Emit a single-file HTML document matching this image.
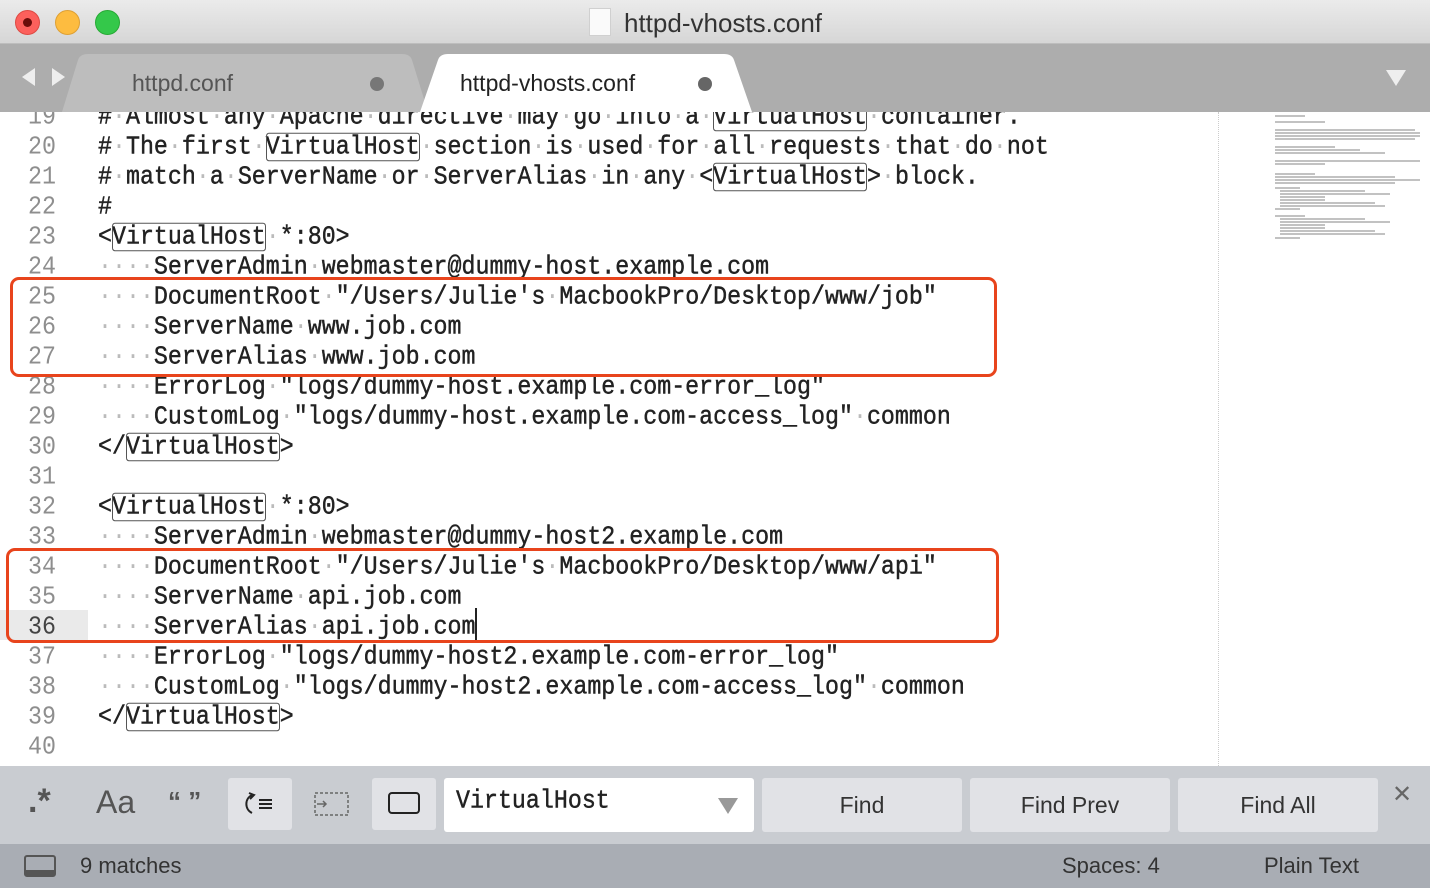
<!DOCTYPE html>
<html><head><meta charset="utf-8"><style>
*{margin:0;padding:0;box-sizing:border-box}
body{width:1430px;height:888px;overflow:hidden;background:#fff;font-family:"Liberation Sans",sans-serif;position:relative}
.title{position:absolute;left:0;top:0;width:1430px;height:44px;background:linear-gradient(#ebebeb,#d6d6d6);border-bottom:1px solid #bdbdbd}
.tl{position:absolute;top:10px;width:25px;height:25px;border-radius:50%}
.ttext{position:absolute;left:624px;top:8px;font-size:26px;color:#333}
.tabbar{position:absolute;left:0;top:44px;width:1430px;height:68px;background:#adadad}
.tab{position:absolute;top:10px;height:58px;font-size:23px;line-height:58px}
.code{position:absolute;left:0;top:112px;width:1430px;height:654px;overflow:hidden}
.ln{position:absolute;left:0;width:88px;padding-left:28px;font-family:"Liberation Mono",monospace;font-size:23.3px;color:#8e8e8e;height:30px;line-height:30px;transform:scaleY(1.1)}
.tx{position:absolute;left:98px;font-family:"Liberation Mono",monospace;font-size:23.3px;color:#222;white-space:pre;height:30px;line-height:30px;transform:scaleY(1.1);-webkit-text-stroke:0.4px #222}
.d{color:#bbb;-webkit-text-stroke:0}
.m{outline:1.5px solid #555;border-radius:3px;outline-offset:-1px}
.red{position:absolute;border:3.5px solid #e8441c;border-radius:9px}
.find{position:absolute;left:0;top:766px;width:1430px;height:78px;background:#c9ccd1}
.status{position:absolute;left:0;top:844px;width:1430px;height:44px;background:#a9adb4;font-size:22px;color:#333}
.btn{position:absolute;top:12px;height:54px;width:200px;background:#e1e2e6;border-radius:3px;font-size:23px;color:#333;text-align:center;line-height:54px}
.mm{position:absolute;height:1.5px;background:#9a9a9a;opacity:.6}
</style></head><body>
<div class="title">
<div class="tl" style="left:15px;background:#fc605c;border:1px solid #de4a43"><div style="width:9px;height:9px;border-radius:50%;background:#6b0d0a;margin:7px"></div></div>
<div class="tl" style="left:55px;background:#fdbc40;border:1px solid #dea034"></div>
<div class="tl" style="left:95px;background:#34c84a;border:1px solid #27aa35"></div>
<div style="position:absolute;left:589px;top:8px;width:22px;height:28px;background:#fafafa;border:1px solid #d0d0d0"></div>
<div class="ttext">httpd-vhosts.conf</div>
</div>
<div class="tabbar">
<div style="position:absolute;left:22px;top:24px;width:0;height:0;border-top:9px solid transparent;border-bottom:9px solid transparent;border-right:13px solid #eee"></div>
<div style="position:absolute;left:52px;top:24px;width:0;height:0;border-top:9px solid transparent;border-bottom:9px solid transparent;border-left:13px solid #eee"></div>
<svg style="position:absolute;left:0;top:0" width="1430" height="68">
<path d="M62 68 L78 16 Q80 10 88 10 L402 10 Q410 10 412 16 L428 68 Z" fill="#bdbdbd"/>
<path d="M420 68 L438 16 Q440 10 448 10 L724 10 Q732 10 734 16 L752 68 Z" fill="#fff"/>
<path d="M1386 26 L1406 26 L1396 42 Z" fill="#eee"/>
</svg>
<div class="tab" style="left:132px;color:#555">httpd.conf</div>
<div style="position:absolute;left:370px;top:33px;width:14px;height:14px;border-radius:50%;background:#777"></div>
<div class="tab" style="left:460px;color:#222">httpd-vhosts.conf</div>
<div style="position:absolute;left:698px;top:33px;width:14px;height:14px;border-radius:50%;background:#666"></div>
</div>
<div class="code">
<div style="position:absolute;left:0;top:498px;width:88px;height:30px;background:#eaeaea"></div>
<div style="position:absolute;left:1218px;top:0;width:0;height:654px;border-left:1px dotted #ccc"></div>
<div class="ln" style="top:-10px">19</div><div class="tx" style="top:-10px">#<span class="d">·</span>Almost<span class="d">·</span>any<span class="d">·</span>Apache<span class="d">·</span>directive<span class="d">·</span>may<span class="d">·</span>go<span class="d">·</span>into<span class="d">·</span>a<span class="d">·</span><span class="m">VirtualHost</span><span class="d">·</span>container.</div>
<div class="ln" style="top:20px">20</div><div class="tx" style="top:20px">#<span class="d">·</span>The<span class="d">·</span>first<span class="d">·</span><span class="m">VirtualHost</span><span class="d">·</span>section<span class="d">·</span>is<span class="d">·</span>used<span class="d">·</span>for<span class="d">·</span>all<span class="d">·</span>requests<span class="d">·</span>that<span class="d">·</span>do<span class="d">·</span>not</div>
<div class="ln" style="top:50px">21</div><div class="tx" style="top:50px">#<span class="d">·</span>match<span class="d">·</span>a<span class="d">·</span>ServerName<span class="d">·</span>or<span class="d">·</span>ServerAlias<span class="d">·</span>in<span class="d">·</span>any<span class="d">·</span>&lt;<span class="m">VirtualHost</span>&gt;<span class="d">·</span>block.</div>
<div class="ln" style="top:80px">22</div><div class="tx" style="top:80px">#</div>
<div class="ln" style="top:110px">23</div><div class="tx" style="top:110px">&lt;<span class="m">VirtualHost</span><span class="d">·</span>*:80&gt;</div>
<div class="ln" style="top:140px">24</div><div class="tx" style="top:140px"><span class="d">····</span>ServerAdmin<span class="d">·</span>webmaster@dummy-host.example.com</div>
<div class="ln" style="top:170px">25</div><div class="tx" style="top:170px"><span class="d">····</span>DocumentRoot<span class="d">·</span>"/Users/Julie's<span class="d">·</span>MacbookPro/Desktop/www/job"</div>
<div class="ln" style="top:200px">26</div><div class="tx" style="top:200px"><span class="d">····</span>ServerName<span class="d">·</span>www.job.com</div>
<div class="ln" style="top:230px">27</div><div class="tx" style="top:230px"><span class="d">····</span>ServerAlias<span class="d">·</span>www.job.com</div>
<div class="ln" style="top:260px">28</div><div class="tx" style="top:260px"><span class="d">····</span>ErrorLog<span class="d">·</span>"logs/dummy-host.example.com-error_log"</div>
<div class="ln" style="top:290px">29</div><div class="tx" style="top:290px"><span class="d">····</span>CustomLog<span class="d">·</span>"logs/dummy-host.example.com-access_log"<span class="d">·</span>common</div>
<div class="ln" style="top:320px">30</div><div class="tx" style="top:320px">&lt;/<span class="m">VirtualHost</span>&gt;</div>
<div class="ln" style="top:350px">31</div>
<div class="ln" style="top:380px">32</div><div class="tx" style="top:380px">&lt;<span class="m">VirtualHost</span><span class="d">·</span>*:80&gt;</div>
<div class="ln" style="top:410px">33</div><div class="tx" style="top:410px"><span class="d">····</span>ServerAdmin<span class="d">·</span>webmaster@dummy-host2.example.com</div>
<div class="ln" style="top:440px">34</div><div class="tx" style="top:440px"><span class="d">····</span>DocumentRoot<span class="d">·</span>"/Users/Julie's<span class="d">·</span>MacbookPro/Desktop/www/api"</div>
<div class="ln" style="top:470px">35</div><div class="tx" style="top:470px"><span class="d">····</span>ServerName<span class="d">·</span>api.job.com</div>
<div class="ln" style="top:500px;color:#444">36</div><div class="tx" style="top:500px"><span class="d">····</span>ServerAlias<span class="d">·</span>api.job.com</div>
<div style="position:absolute;left:475px;top:496px;width:2px;height:32px;background:#222"></div>
<div class="ln" style="top:530px">37</div><div class="tx" style="top:530px"><span class="d">····</span>ErrorLog<span class="d">·</span>"logs/dummy-host2.example.com-error_log"</div>
<div class="ln" style="top:560px">38</div><div class="tx" style="top:560px"><span class="d">····</span>CustomLog<span class="d">·</span>"logs/dummy-host2.example.com-access_log"<span class="d">·</span>common</div>
<div class="ln" style="top:590px">39</div><div class="tx" style="top:590px">&lt;/<span class="m">VirtualHost</span>&gt;</div>
<div class="ln" style="top:620px">40</div>
<div class="red" style="left:10px;top:165px;width:987px;height:100px"></div>
<div class="red" style="left:6px;top:436px;width:993px;height:95px"></div>
<div class="mm" style="left:1275px;top:3px;width:30px"></div>
<div class="mm" style="left:1275px;top:9px;width:50px"></div>
<div class="mm" style="left:1275px;top:17px;width:140px"></div>
<div class="mm" style="left:1275px;top:20px;width:145px"></div>
<div class="mm" style="left:1275px;top:23px;width:145px"></div>
<div class="mm" style="left:1275px;top:26px;width:140px"></div>
<div class="mm" style="left:1275px;top:34px;width:60px"></div>
<div class="mm" style="left:1275px;top:37px;width:85px"></div>
<div class="mm" style="left:1275px;top:40px;width:110px"></div>
<div class="mm" style="left:1275px;top:48px;width:145px"></div>
<div class="mm" style="left:1275px;top:51px;width:50px"></div>
<div class="mm" style="left:1275px;top:61px;width:40px"></div>
<div class="mm" style="left:1275px;top:64px;width:120px"></div>
<div class="mm" style="left:1275px;top:67px;width:145px"></div>
<div class="mm" style="left:1275px;top:70px;width:120px"></div>
<div class="mm" style="left:1275px;top:75px;width:25px"></div>
<div class="mm" style="left:1280px;top:78px;width:85px"></div>
<div class="mm" style="left:1280px;top:81px;width:110px"></div>
<div class="mm" style="left:1280px;top:84px;width:45px"></div>
<div class="mm" style="left:1280px;top:87px;width:45px"></div>
<div class="mm" style="left:1280px;top:90px;width:95px"></div>
<div class="mm" style="left:1280px;top:93px;width:105px"></div>
<div class="mm" style="left:1275px;top:96px;width:25px"></div>
<div class="mm" style="left:1275px;top:103px;width:30px"></div>
<div class="mm" style="left:1280px;top:106px;width:85px"></div>
<div class="mm" style="left:1280px;top:109px;width:110px"></div>
<div class="mm" style="left:1280px;top:112px;width:45px"></div>
<div class="mm" style="left:1280px;top:115px;width:45px"></div>
<div class="mm" style="left:1280px;top:118px;width:95px"></div>
<div class="mm" style="left:1280px;top:121px;width:105px"></div>
<div class="mm" style="left:1275px;top:125px;width:25px"></div>
</div>
<div class="find">
<div style="position:absolute;left:28px;top:16px;font-size:34px;color:#555;font-weight:bold">.*</div>
<div style="position:absolute;left:96px;top:18px;font-size:32px;color:#555">Aa</div>
<div style="position:absolute;left:168px;top:20px;font-size:26px;color:#555;font-weight:bold">“ ”</div>
<div style="position:absolute;left:228px;top:12px;width:64px;height:52px;background:#e1e2e6;border-radius:3px"></div>
<svg style="position:absolute;left:242px;top:26px" width="36" height="24"><path d="M10 3 A10 10 0 0 0 10 21" stroke="#222" stroke-width="2" fill="none"/><path d="M7 1 L12 3 L8 7" stroke="#222" stroke-width="2" fill="none"/><path d="M17 8H30M17 12H30M17 16H30" stroke="#222" stroke-width="2"/></svg>
<svg style="position:absolute;left:314px;top:26px" width="36" height="24"><rect x="1" y="1" width="33" height="22" fill="none" stroke="#666" stroke-width="1.5" stroke-dasharray="3 2"/><path d="M3 12H12M9 9L12 12L9 15" stroke="#666" stroke-width="1.5" fill="none"/></svg>
<div style="position:absolute;left:372px;top:12px;width:64px;height:52px;background:#e1e2e6;border-radius:3px"></div>
<div style="position:absolute;left:388px;top:26px;width:32px;height:22px;border:2px solid #222;border-radius:4px"></div>
<div style="position:absolute;left:444px;top:12px;width:310px;height:54px;background:#fff;border-radius:3px"></div>
<div style="position:absolute;left:456px;top:22px;font-family:'Liberation Mono',monospace;font-size:23.3px;color:#222;transform:scaleY(1.1);-webkit-text-stroke:0.4px #222">VirtualHost</div>
<div style="position:absolute;left:718px;top:32px;border-left:10px solid transparent;border-right:10px solid transparent;border-top:16px solid #999"></div>
<div class="btn" style="left:762px">Find</div>
<div class="btn" style="left:970px">Find Prev</div>
<div class="btn" style="left:1178px">Find All</div>
<div style="position:absolute;left:1392px;top:14px;font-size:24px;color:#666">✕</div>
</div>
<div class="status">
<div style="position:absolute;left:24px;top:11px;width:32px;height:22px;border:2px solid #555;border-radius:3px;border-bottom:7px solid #555"></div>
<div style="position:absolute;left:80px;top:9px">9 matches</div>
<div style="position:absolute;left:1062px;top:9px">Spaces: 4</div>
<div style="position:absolute;left:1264px;top:9px">Plain Text</div>
</div>
</body></html>
